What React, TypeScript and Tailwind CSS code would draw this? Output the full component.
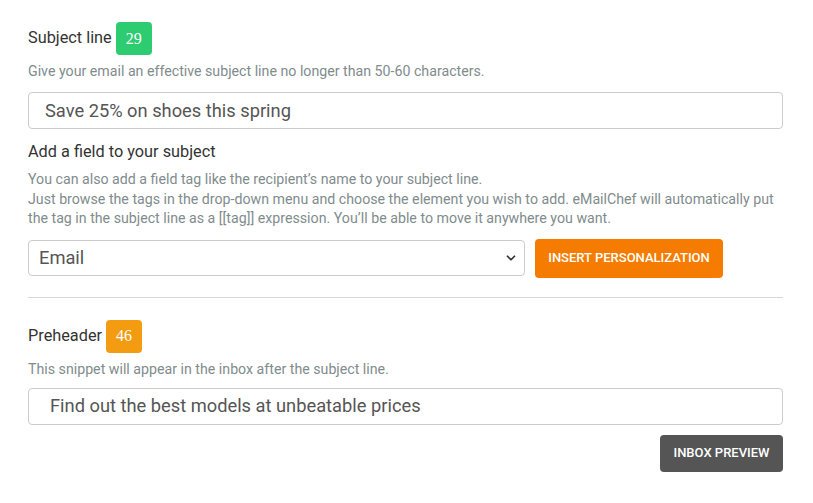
import { ChevronDown } from "lucide-react";

function Badge({ value, color }: { value: number; color: string }) {
  return (
    <span
      className={`ml-[4px] inline-flex h-[33px] w-[36px] items-center justify-center rounded-[4px] text-[16px] text-white ${color}`}
      style={{ fontFamily: '"Liberation Serif", "Times New Roman", serif' }}
    >
      {value}
    </span>
  );
}

export default function App() {
  return (
    <div
      className="h-[503px] w-[813px] bg-white px-[28px] pt-[22px] text-[#333]"
      style={{ fontFamily: 'Roboto, "Liberation Sans", Arial, sans-serif' }}
    >
      <div className="flex items-center">
        <span className="text-[16.3px] text-[#333]">Subject line</span>
        <Badge value={29} color="bg-[#2ecc71]" />
      </div>
      <p className="mt-[6px] text-[14.2px] leading-[20px] text-[#7f8c8d]">
        Give your email an effective subject line no longer than 50-60 characters.
      </p>
      <div className="mt-[11px] flex h-[37px] w-[755px] items-center rounded-[4px] border border-[#ccc] pl-[16px] text-[18.3px] text-[#555]">
        Save 25% on shoes this spring
      </div>

      <div className="mt-[13px] text-[16.3px] leading-[20px] text-[#333]">Add a field to your subject</div>
      <p className="mt-[8px] w-[755px] text-[14.2px] leading-[19.5px] text-[#7f8c8d]">
        You can also add a field tag like the recipient’s name to your subject line.
        <br />
        Just browse the tags in the drop-down menu and choose the element you wish to add. eMailChef will automatically put
        the tag in the subject line as a [[tag]] expression. You’ll be able to move it anywhere you want.
      </p>

      <div className="mt-[10px] flex items-center">
        <div className="flex h-[36px] w-[497px] items-center justify-between rounded-[4px] border border-[#ccc] pl-[10px] pr-[6px] text-[18.3px] text-[#555]">
          <span>Email</span>
          <ChevronDown className="h-[14px] w-[14px] text-[#333]" strokeWidth={3} />
        </div>
        <button className="ml-[10px] h-[39px] w-[188px] rounded-[4px] bg-[#f57c00] text-[13px] font-medium uppercase text-white">
          Insert personalization
        </button>
      </div>

      <div className="mt-[19px] h-px w-[755px] bg-[#d6d6d6]" />

      <div className="mt-[22px] flex items-center">
        <span className="text-[16.3px] text-[#333]">Preheader</span>
        <Badge value={46} color="bg-[#f39c12]" />
      </div>
      <p className="mt-[6px] text-[14.2px] leading-[20px] text-[#7f8c8d]">
        This snippet will appear in the inbox after the subject line.
      </p>
      <div className="mt-[9px] flex h-[37px] w-[755px] items-center rounded-[4px] border border-[#ccc] pl-[21px] text-[18.3px] text-[#555]">
        Find out the best models at unbeatable prices
      </div>
      <div className="mt-[10px] flex w-[755px] justify-end">
        <button className="h-[37px] w-[123px] rounded-[4px] bg-[#555] text-[13px] font-medium uppercase text-white">
          Inbox preview
        </button>
      </div>
    </div>
  );
}
